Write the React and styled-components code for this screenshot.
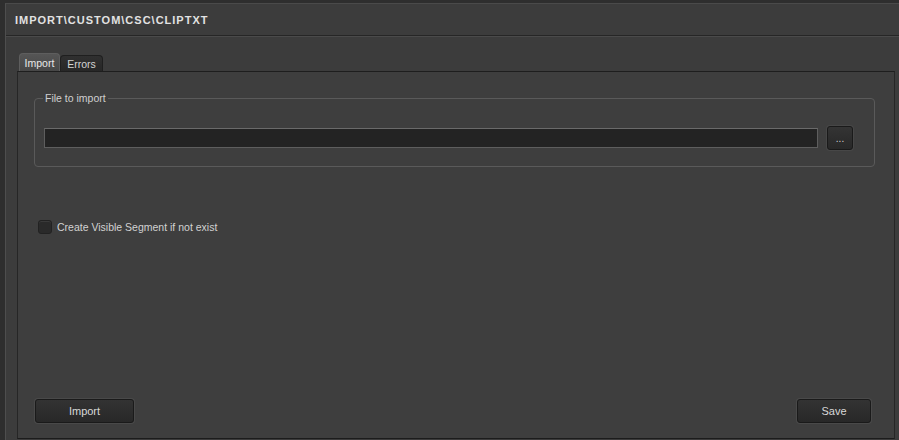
import React from 'react';
import styled, { createGlobalStyle } from 'styled-components';

const GlobalStyle = createGlobalStyle`
    html, body {
        margin: 0;
        padding: 0;
        background: #2e2e2e;
        font-family: "Liberation Sans", Arial, sans-serif;
    }
    #root {
        height: 440px;
        overflow: hidden;
    }
`;

export default function App() {
    return (
        <>
            <GlobalStyle />
            <Window>
                <TitleBar>IMPORT\CUSTOM\CSC\CLIPTXT</TitleBar>
                <Body>
                    <Tabs>
                        <Tab active>Import</Tab>
                        <Tab>Errors</Tab>
                    </Tabs>
                    <Panel>
                        <Group>
                            <Legend>File to import</Legend>
                            <FileRow>
                                <PathInput />
                                <BrowseButton>...</BrowseButton>
                            </FileRow>
                        </Group>
                        <CheckRow>
                            <Box />
                            <CheckLabel>Create Visible Segment if not exist</CheckLabel>
                        </CheckRow>
                        <Footer>
                            <Button width={99}>Import</Button>
                            <Button width={74}>Save</Button>
                        </Footer>
                    </Panel>
                </Body>
            </Window>
        </>
    );
}

const Window = styled.div`
    display: flex;
    flex-direction: column;
    height: 435px;
    padding-bottom: 1px;
    margin: 3px 0 0 5px;
    border-top: 1px solid #4a4a4a;
    border-left: 1px solid #4e4e4e;
    background: #3c3c3c;
`;

const TitleBar = styled.div`
    display: flex;
    align-items: center;
    height: 31px;
    padding-left: 9px;
    color: #e2e2e2;
    font-size: 11px;
    font-weight: bold;
    letter-spacing: 1px;
    border-bottom: 1px solid #262626;
    box-shadow: 0 1px 0 #4a4a4a;
`;

const Body = styled.div`
    display: flex;
    flex-direction: column;
    flex: 1;
    padding: 17px 4px 0 11px;
`;

const Tabs = styled.div`
    display: flex;
    height: 18px;
    padding-left: 2px;
`;

const Tab = styled.div`
    display: flex;
    align-items: center;
    justify-content: center;
    width: ${p => (p.active ? 41 : 43)}px;
    color: ${p => (p.active ? '#e8e8e8' : '#d4d4d4')};
    font-size: 10.5px;
    background: ${p => (p.active ? 'linear-gradient(#555, #474747)' : 'linear-gradient(#303030, #272727)')};
    border: 1px solid ${p => (p.active ? '#5e5e5e' : '#1f1f1f')};
    border-bottom: none;
    border-radius: 4px 4px 0 0;
    box-sizing: border-box;
    margin-top: ${p => (p.active ? 0 : 2)}px;
`;

const Panel = styled.div`
    display: flex;
    flex-direction: column;
    flex: 1;
    padding: 26px 19px 15px 16px;
    background: #3e3e3e;
    border-top: 1px solid #1e1e1e;
    border-left: 1px solid #262626;
    border-right: 1px solid #262626;
    border-bottom: 1px solid #1c1c1c;
`;

const Group = styled.div`
    position: relative;
    height: 67px;
    border: 1px solid #5a5a5a;
    border-radius: 4px;
`;

const Legend = styled.span`
    position: absolute;
    top: -8px;
    left: 8px;
    padding: 0 2px;
    background: #3e3e3e;
    color: #cfcfcf;
    font-size: 10.5px;
    line-height: 14px;
`;

const FileRow = styled.div`
    display: flex;
    align-items: center;
    gap: 9px;
    padding: 27px 21px 0 9px;
`;

const PathInput = styled.div`
    flex: 1;
    height: 20px;
    box-sizing: border-box;
    background: #232323;
    border: 1px solid #5e5e5e;
    border-top-color: #6a6a6a;
`;

const BrowseButton = styled.div`
    display: flex;
    align-items: center;
    justify-content: center;
    width: 26px;
    height: 24px;
    box-sizing: border-box;
    color: #cfcfcf;
    font-size: 10px;
    background: linear-gradient(#343434, #282828);
    border: 1px solid #1a1a1a;
    border-radius: 3px;
    box-shadow: 0 0 0 1px #474747;
`;

const CheckRow = styled.div`
    display: flex;
    align-items: center;
    gap: 5px;
    margin-top: 53px;
    padding-left: 4px;
`;

const Box = styled.div`
    width: 14px;
    height: 14px;
    box-sizing: border-box;
    background: #2a2a2a;
    border: 1px solid #222;
    border-radius: 3px;
    box-shadow: inset 0 1px 0 #3a3a3a;
`;

const CheckLabel = styled.span`
    color: #d2d2d2;
    font-size: 10.5px;
`;

const Footer = styled.div`
    display: flex;
    justify-content: space-between;
    margin-top: auto;
    padding: 0 4px 0 1px;
`;

const Button = styled.div`
    display: flex;
    align-items: center;
    justify-content: center;
    width: ${p => p.width}px;
    height: 24px;
    box-sizing: border-box;
    color: #d8d8d8;
    font-size: 11px;
    background: linear-gradient(#333, #282828);
    border: 1px solid #1a1a1a;
    border-radius: 3px;
    box-shadow: 0 0 0 1px #494949;
`;
